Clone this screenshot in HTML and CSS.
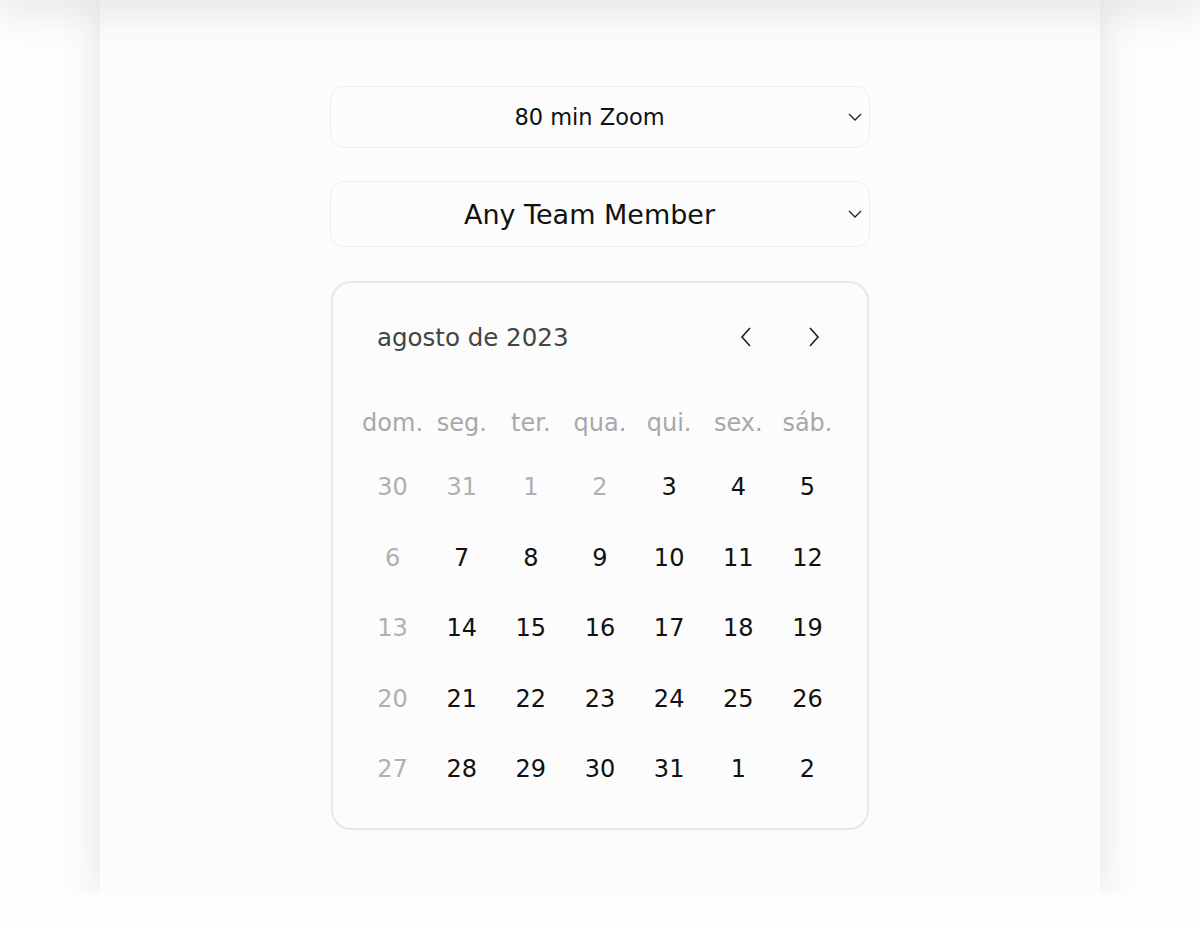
FILE: index.html
```html
<!DOCTYPE html>
<html lang="pt">
<head>
<meta charset="utf-8">
<link rel="stylesheet" href="styles.css">
</head>
<body>
<div class="topbar"></div>
<main class="card">
  <div class="select small">
    <span class="select-label">80 min Zoom</span>
    <svg class="chev" width="14" height="8" viewBox="0 0 14 8"><path d="M1 1l6 6 6-6" fill="none" stroke="#222" stroke-width="1.3"/></svg>
  </div>
  <div class="select big">
    <span class="select-label">Any Team Member</span>
    <svg class="chev" width="14" height="8" viewBox="0 0 14 8"><path d="M1 1l6 6 6-6" fill="none" stroke="#222" stroke-width="1.3"/></svg>
  </div>
  <section class="calendar">
    <div class="cal-head">
      <span class="month">agosto de 2023</span>
      <div class="nav">
        <svg width="12" height="20" viewBox="0 0 12 20"><path d="M10 1L2 10l8 9" fill="none" stroke="#222" stroke-width="1.6"/></svg>
        <svg width="12" height="20" viewBox="0 0 12 20"><path d="M2 1l8 9-8 9" fill="none" stroke="#222" stroke-width="1.6"/></svg>
      </div>
    </div>
    <div class="grid">
      <span class="wd">dom.</span><span class="wd">seg.</span><span class="wd">ter.</span><span class="wd">qua.</span><span class="wd">qui.</span><span class="wd">sex.</span><span class="wd">sáb.</span>
      <span class="d off">30</span><span class="d off">31</span><span class="d off">1</span><span class="d off">2</span><span class="d">3</span><span class="d">4</span><span class="d">5</span>
      <span class="d off">6</span><span class="d">7</span><span class="d">8</span><span class="d">9</span><span class="d">10</span><span class="d">11</span><span class="d">12</span>
      <span class="d off">13</span><span class="d">14</span><span class="d">15</span><span class="d">16</span><span class="d">17</span><span class="d">18</span><span class="d">19</span>
      <span class="d off">20</span><span class="d">21</span><span class="d">22</span><span class="d">23</span><span class="d">24</span><span class="d">25</span><span class="d">26</span>
      <span class="d off">27</span><span class="d">28</span><span class="d">29</span><span class="d">30</span><span class="d">31</span><span class="d">1</span><span class="d">2</span>
    </div>
  </section>
</main>
</body>
</html>
```

FILE: styles.css
```css
html, body {
  margin: 0;
  padding: 0;
  background: #fdfdfd;
  font-family: "DejaVu Sans", "Noto Sans", sans-serif;
  overflow: hidden;
}

.topbar {
  position: relative;
  z-index: 2;
  height: 40px;
  margin-top: -40px;
  background: #eeeeee;
  box-shadow: 0 10px 40px rgba(0, 0, 0, 0.1);
}

.card {
  width: 1000px;
  margin: 0 auto;
  background: #fcfcfc;
  box-shadow: 0 0 40px rgba(0, 0, 0, 0.1);
  padding: 86px 0 64px;
  display: flex;
  flex-direction: column;
  align-items: center;
}

.select {
  box-sizing: border-box;
  width: 540px;
  display: flex;
  align-items: center;
  border: 1px solid #efeee6;
  border-radius: 14px;
  padding-right: 7px;
  color: #111;
}
.select.small { height: 62px; font-size: 22.5px; }
.select.big { height: 66px; font-size: 27px; margin-top: 33px; }
.select-label { flex: 1; text-align: center; }
.chev { display: block; }

.calendar {
  box-sizing: border-box;
  width: 538px;
  margin-top: 34px;
  border: 2px solid #ebe9dc;
  border-radius: 20px;
  padding: 0 25px 23.5px;
}

.cal-head {
  display: flex;
  align-items: center;
  justify-content: space-between;
  height: 56px;
  margin-top: 26px;
  padding-left: 19px;
  padding-right: 22px;
}
.month { font-size: 24.5px; color: #444; }
.nav { display: flex; gap: 56px; }
.nav svg { display: block; }

.grid {
  display: grid;
  grid-template-columns: repeat(7, 1fr);
  grid-template-rows: 58px repeat(5, 70.5px);
  margin-top: 29px;
}
.grid span {
  display: flex;
  align-items: center;
  justify-content: center;
  font-size: 24px;
}
.wd { color: #a8a8a8; }
.d { color: #111; }
.d.off { color: #b0b0b0; }
```
